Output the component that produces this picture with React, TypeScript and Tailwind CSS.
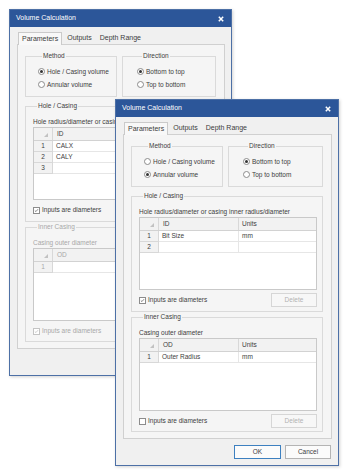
import React from "react";

type Row = { num: string; a: string; b: string };

const FONT = "font-['Liberation_Sans',Arial,sans-serif]";

const Radio = ({ checked, label }: { checked?: boolean; label: string }) => (
  <div className="flex h-[13px] items-center gap-[2px]">
    <span className="flex h-[7px] w-[7px] items-center justify-center rounded-full border border-[#8c8c8c] bg-white">
      {checked && <span className="h-[3px] w-[3px] rounded-full bg-[#333]" />}
    </span>
    <span>{label}</span>
  </div>
);

const Checkbox = ({ checked, disabled, label }: { checked?: boolean; disabled?: boolean; label: string }) => (
  <div className={`flex items-center gap-[2px] ${disabled ? "text-[#a8a8a8]" : ""}`}>
    <span
      className={`flex h-[7px] w-[7px] items-center justify-center border bg-white ${
        disabled ? "border-[#c4c4c4]" : "border-[#8c8c8c]"
      }`}
    >
      {checked && (
        <svg width="7" height="7" viewBox="0 0 7 7">
          <polyline
            points="1.2,3.5 2.7,5 5.6,1.7"
            fill="none"
            stroke={disabled ? "#b0b0b0" : "#444"}
            strokeWidth="0.9"
          />
        </svg>
      )}
    </span>
    <span>{label}</span>
  </div>
);

const Grid = ({ cols, rows, disabled }: { cols: [string, string]; rows: Row[]; disabled?: boolean }) => (
  <div className="mt-[1px] flex h-[73px] flex-col overflow-hidden border border-[#c9c9c9] bg-white">
    <div className={`flex h-[13px] shrink-0 border-b border-[#d2d2d2] bg-[#f2f2f2] ${disabled ? "text-[#a8a8a8]" : ""}`}>
      <div className="flex w-[19px] shrink-0 items-end justify-end border-r border-[#d8d8d8] pb-[3px] pr-[4px]">
        <svg width="4" height="4" viewBox="0 0 4 4">
          <polygon points="4,0 4,4 0,4" fill="#c2c2c2" />
        </svg>
      </div>
      <div className="flex w-[80px] shrink-0 items-center border-r border-[#d8d8d8] pl-[4px]">{cols[0]}</div>
      <div className="flex flex-1 items-center pl-[3px]">{cols[1]}</div>
    </div>
    {rows.map((r) => (
      <div key={r.num} className="flex h-[11px] shrink-0">
        <div className="flex w-[19px] shrink-0 items-center justify-center border-b border-r border-[#d8d8d8] bg-[#f2f2f2]">
          {r.num}
        </div>
        <div className="flex w-[80px] shrink-0 items-center border-b border-r border-[#e6e6e6] pl-[3px]">{r.a}</div>
        <div className="flex flex-1 items-center border-b border-[#e6e6e6] pl-[3px]">{r.b}</div>
      </div>
    ))}
  </div>
);

const DeleteBtn = () => (
  <div className="flex h-[14px] w-[46px] items-center justify-center border border-[#d6d6d6] bg-[#f7f7f7] text-[#b2b2b2]">
    Delete
  </div>
);

type WinProps = {
  pos: string;
  annular?: boolean;
  holeRows: Row[];
  innerRows: Row[];
  innerDisabled?: boolean;
  innerChecked?: boolean;
};

const Window = ({ pos, annular, holeRows, innerRows, innerDisabled, innerChecked }: WinProps) => (
  <div
    className={`absolute flex h-[367px] flex-col border border-[#4d70a6] bg-[#f0f0f0] text-[6.5px] text-[#3d3d3d] shadow-[1px_1px_3px_rgba(0,0,0,0.18)] ${FONT} ${pos}`}
  >
    <div className="flex h-[17px] shrink-0 items-center justify-between bg-[#2c5699] pl-[6px] pr-[7px] text-[7px] text-white">
      <span>Volume Calculation</span>
      <svg width="6" height="6" viewBox="0 0 6 6">
        <path d="M0.8 0.8 L5.2 5.2 M5.2 0.8 L0.8 5.2" stroke="#fff" strokeWidth="1.5" />
      </svg>
    </div>

    <div className="flex flex-1 flex-col pl-[7px] pr-[6px] pt-[5px]">
      <div className="flex h-[12px] items-stretch pl-[1px] text-[7px]">
        <div className="relative z-10 -mb-[1px] flex items-center border border-b-0 border-[#cacaca] bg-[#f8f8f8] px-[3px]">
          Parameters
        </div>
        <div className="flex items-center pl-[5px]">Outputs</div>
        <div className="flex items-center pl-[8px]">Depth Range</div>
      </div>

      <div className="flex flex-col border border-[#d0d0d0] bg-[#f5f5f5] pb-[6px] pl-[7px] pr-[8px] pt-[6px]">
        <div className="flex gap-[5px]">
          <fieldset className="w-[92px] shrink-0 border border-[#dadada] pb-[5px] pl-[12px]">
            <legend className="ml-[4px] px-[1px] leading-[10px]">Method</legend>
            <div className="mt-[4px]">
              <Radio checked={!annular} label="Hole / Casing volume" />
              <Radio checked={annular} label="Annular volume" />
            </div>
          </fieldset>
          <fieldset className="flex-1 border border-[#dadada] pb-[5px] pl-[14px]">
            <legend className="ml-[5px] px-[1px] leading-[10px]">Direction</legend>
            <div className="mt-[4px]">
              <Radio checked label="Bottom to top" />
              <Radio label="Top to bottom" />
            </div>
          </fieldset>
        </div>

        <fieldset className="mt-[4px] border border-[#dadada] pb-[4px] pl-[7px] pr-[5px]">
          <legend className="ml-[4px] px-[1px] leading-[10px]">Hole / Casing</legend>
          <div className="mt-[7px] h-[8px] whitespace-nowrap leading-[8px]">
            Hole radius/diameter or casing inner radius/diameter
          </div>
          <Grid cols={["ID", "Units"]} rows={holeRows} />
          <div className="mt-[3px] flex items-center justify-between">
            <Checkbox checked label="Inputs are diameters" />
            <DeleteBtn />
          </div>
        </fieldset>

        <fieldset className={`border border-[#dadada] pb-[3px] pl-[7px] pr-[5px] ${innerDisabled ? "text-[#a8a8a8]" : ""}`}>
          <legend className="ml-[4px] px-[1px] leading-[10px]">Inner Casing</legend>
          <div className="mt-[7px] h-[8px] whitespace-nowrap leading-[8px]">Casing outer diameter</div>
          <Grid cols={["OD", "Units"]} rows={innerRows} disabled={innerDisabled} />
          <div className="mt-[3px] flex items-center justify-between">
            <Checkbox checked={innerChecked} disabled={innerDisabled} label="Inputs are diameters" />
            <DeleteBtn />
          </div>
        </fieldset>
      </div>

      <div className="mt-[6px] flex justify-end gap-[4px] pr-[1px] text-[6.5px]">
        <div className="flex h-[14px] w-[47px] items-center justify-center border border-[#3d80c0] bg-[#fbfbfb]">OK</div>
        <div className="flex h-[14px] w-[46px] items-center justify-center border border-[#b4b4b4] bg-[#fbfbfb]">
          Cancel
        </div>
      </div>
    </div>
  </div>
);

export default function App() {
  return (
    <div className="relative h-[476px] w-[350px] overflow-hidden bg-white">
      <Window
        pos="left-[9px] top-[9px] w-[223px]"
        holeRows={[
          { num: "1", a: "CALX", b: "" },
          { num: "2", a: "CALY", b: "" },
          { num: "3", a: "", b: "" },
        ]}
        innerRows={[{ num: "1", a: "", b: "" }]}
        innerDisabled
        innerChecked
      />
      <Window
        pos="left-[115px] top-[99px] w-[224px]"
        annular
        holeRows={[
          { num: "1", a: "Bit Size", b: "mm" },
          { num: "2", a: "", b: "" },
        ]}
        innerRows={[{ num: "1", a: "Outer Radius", b: "mm" }]}
      />
    </div>
  );
}
